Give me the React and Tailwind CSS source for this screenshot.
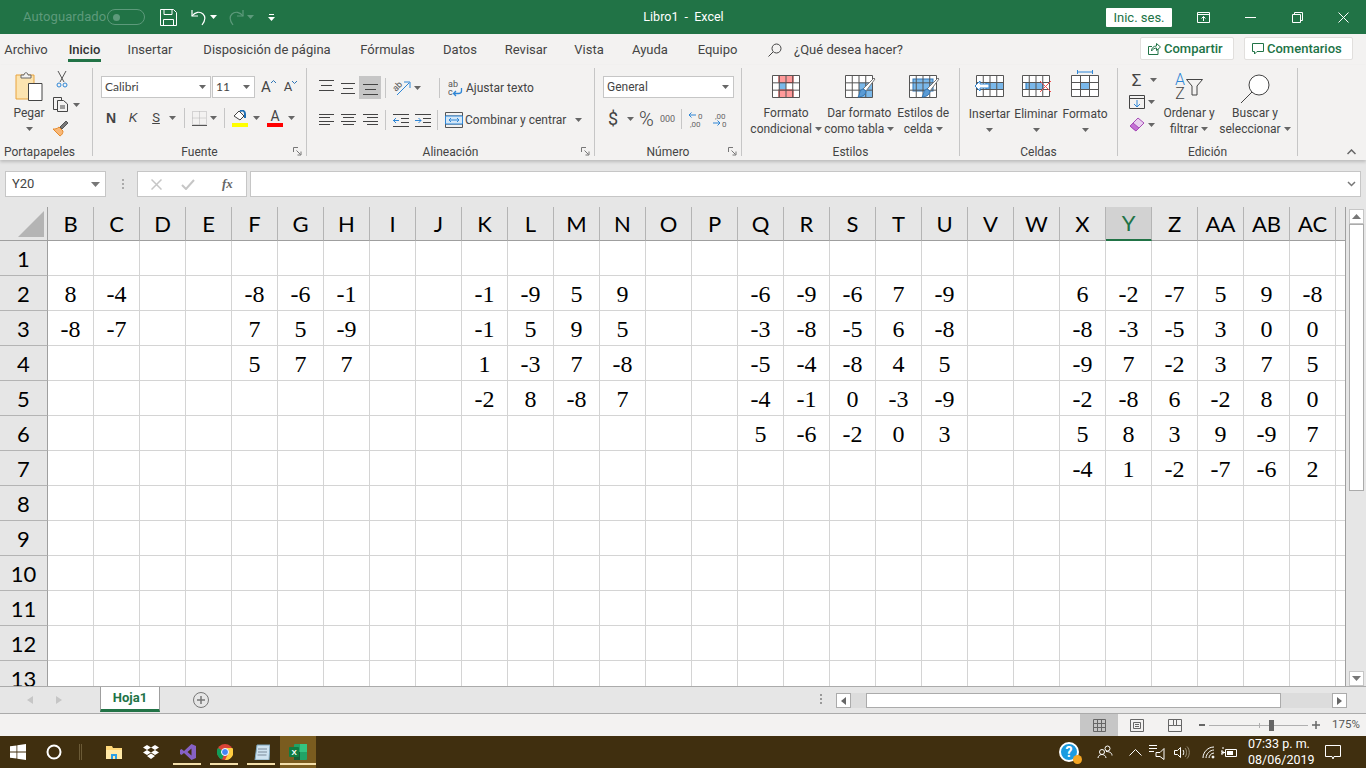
import React from "react";

const COLS = ["B","C","D","E","F","G","H","I","J","K","L","M","N","O","P","Q","R","S","T","U","V","W","X","Y","Z","AA","AB","AC",""];
const DATA = {
  2: { B:8,C:-4,F:-8,G:-6,H:-1,K:-1,L:-9,M:5,N:9,Q:-6,R:-9,S:-6,T:7,U:-9,X:6,Y:-2,Z:-7,AA:5,AB:9,AC:-8 },
  3: { B:-8,C:-7,F:7,G:5,H:-9,K:-1,L:5,M:9,N:5,Q:-3,R:-8,S:-5,T:6,U:-8,X:-8,Y:-3,Z:-5,AA:3,AB:0,AC:0 },
  4: { F:5,G:7,H:7,K:1,L:-3,M:7,N:-8,Q:-5,R:-4,S:-8,T:4,U:5,X:-9,Y:7,Z:-2,AA:3,AB:7,AC:5 },
  5: { K:-2,L:8,M:-8,N:7,Q:-4,R:-1,S:0,T:-3,U:-9,X:-2,Y:-8,Z:6,AA:-2,AB:8,AC:0 },
  6: { Q:5,R:-6,S:-2,T:0,U:3,X:5,Y:8,Z:3,AA:9,AB:-9,AC:7 },
  7: { X:-4,Y:1,Z:-2,AA:-7,AB:-6,AC:2 },
};
const ROWS = [1,2,3,4,5,6,7,8,9,10,11,12,13];

const Caret = ({ c = "#666" }) => (
  <svg width="7" height="4" viewBox="0 0 7 4" className="shrink-0"><path d="M0 0h7L3.5 4z" fill={c} /></svg>
);

const Launcher = () => (
  <svg width="9" height="9" viewBox="0 0 9 9" className="absolute right-[4px] bottom-0" fill="none" stroke="#777">
    <path d="M.5 5V.5H5" /><path d="M3.5 3.5l4 4M8 4.5V8H4.5" />
  </svg>
);

const Group = ({ w, label, children }) => (
  <div className={`relative mt-[3px] h-[88px] shrink-0 border-r border-[#c6c6c6] ${w}`}>
    <div className="h-[76px]">{children}</div>
    <div className="h-[16px] text-center text-[12px] leading-[16px] text-[#444]">{label}</div>
  </div>
);

const Lines = ({ rows }) => (
  <svg width="15" height="14" viewBox="0 0 15 14" fill="none" stroke="#444">
    {rows.map((r, i) => <path key={i} d={`M${r[0]} ${r[2]+.5}H${r[1]}`} />)}
  </svg>
);

const TableIcon = ({ children, w = 28, h = 23, cols = 4, rows = 3 }) => {
  const v = [], hh = [];
  for (let i = 0; i <= cols; i++) v.push(.5 + i * (w - 1) / cols);
  for (let i = 0; i <= rows; i++) hh.push(.5 + i * (h - 1) / rows);
  return (
    <svg width={w} height={h} viewBox={`0 0 ${w} ${h}`} fill="none">
      <rect x=".5" y=".5" width={w-1} height={h-1} fill="#fff" />
      {children}
      {v.map((x) => <path key={x} d={`M${x} .5V${h-.5}`} stroke="#555" />)}
      {hh.map((y) => <path key={y} d={`M.5 ${y}H${w-.5}`} stroke="#555" />)}
    </svg>
  );
};

const Brush = () => (
  <svg width="20" height="24" viewBox="0 0 20 24" className="absolute right-[-3px] bottom-[-3px]">
    <path d="M18 1l1 1-9 12-3-2z" fill="#fff" stroke="#777" />
    <path d="M7 12l3 2c0 3-3 6-8 6 2-2 1-7 5-8z" fill="#5a9bd5" stroke="#2f75b5" />
  </svg>
);

const Bottom2 = ({ a, b, w }) => (
  <div className={`flex flex-col items-center text-[12px] leading-[16px] text-[#444] whitespace-nowrap ${w || ""}`}>
    <span>{a}</span>
    <span className="flex items-center gap-[3px]">{b}<Caret /></span>
  </div>
);

const Tab = ({ w, children, on }) => (
  <div className={`h-full shrink-0 flex flex-col items-center pt-[7px] text-[13px] leading-[18px] whitespace-nowrap ${w} ${on ? "text-[#333] font-medium" : "text-[#444]"}`}>
    <span>{children}</span>
    {on && <span className="h-[2.5px] w-full bg-[#217346]" />}
  </div>
);

function TitleBar() {
  return (
    <div className="h-[34px] bg-[#217346] flex items-center text-white relative">
      <span className="ml-[23px] w-[84px] text-[13px] text-[#5d9a7b] tracking-[0.1px]">Autoguardado</span>
      <div className="w-[38px] h-[16px] rounded-full border border-[#5d9a7b] flex items-center pl-[5px]">
        <span className="w-[7px] h-[7px] rounded-full bg-[#5d9a7b]" />
      </div>
      <svg width="17" height="17" viewBox="0 0 17 17" fill="none" stroke="#fff" className="ml-[15px]">
        <path d="M.5.5h13l3 3v13H.5z" /><path d="M4 .5v5h8v-5M3.5 16.5v-6h10v6" />
      </svg>
      <svg width="16" height="17" viewBox="0 0 16 17" fill="none" stroke="#fff" strokeWidth="1.2" className="ml-[14px]">
        <path d="M1 1v6h6" /><path d="M1 7c3-4 8-5 11-2s2 7-1 11" />
      </svg>
      <span className="ml-[3px]"><Caret c="#fff" /></span>
      <svg width="16" height="17" viewBox="0 0 16 17" fill="none" stroke="#5d9a7b" strokeWidth="1.2" className="ml-[11px]">
        <path d="M15 1v6H9" /><path d="M15 7c-3-4-8-5-11-2s-2 7 1 11" />
      </svg>
      <span className="ml-[3px]"><Caret c="#5d9a7b" /></span>
      <svg width="7" height="7" viewBox="0 0 7 7" className="ml-[14px]"><path d="M1 0h5v1H1zM0 3h7L3.5 7z" fill="#fff" /></svg>
      <div className="flex-1 flex justify-center pr-[14px] text-[12.5px] whitespace-pre text-white">Libro1  -  Excel</div>
      <div className="w-[66px] h-[19px] bg-white rounded-[1px] text-[#217346] text-[13px] leading-[19px] text-center">Inic. ses.</div>
      <svg width="14" height="11" viewBox="0 0 14 11" fill="none" stroke="#fff" className="ml-[25px]">
        <path d="M.5.5h12v10H.5zM.5 2.5h12M6.5 9V4.5M4.5 6.5l2-2 2 2" />
      </svg>
      <div className="ml-[34px] w-[11px] h-px bg-white" />
      <svg width="11" height="11" viewBox="0 0 11 11" fill="none" stroke="#fff" className="ml-[36px]">
        <path d="M.5 2.5h8v8h-8zM2.5 2.5v-2h8v8h-2" />
      </svg>
      <svg width="11" height="11" viewBox="0 0 11 11" fill="none" stroke="#fff" className="ml-[35px] mr-[17px]">
        <path d="M.5.5l10 10M10.5.5l-10 10" />
      </svg>
    </div>
  );
}

function TabsRow() {
  return (
    <div className="h-[31px] bg-[#f3f2f1] flex items-stretch">
      <div className="flex h-full pl-[5px]">
        <Tab w="w-[42px]">Archivo</Tab>
        <div className="w-[21px]" />
        <Tab w="w-[33px]" on>Inicio</Tab>
        <div className="w-[27px]" />
        <Tab w="w-[44px]">Insertar</Tab>
        <div className="w-[30px]" />
        <Tab w="w-[130px]">Disposición de página</Tab>
        <div className="w-[29px]" />
        <Tab w="w-[53px]">Fórmulas</Tab>
        <div className="w-[29px]" />
        <Tab w="w-[34px]">Datos</Tab>
        <div className="w-[28px]" />
        <Tab w="w-[42px]">Revisar</Tab>
        <div className="w-[28px]" />
        <Tab w="w-[28px]">Vista</Tab>
        <div className="w-[29px]" />
        <Tab w="w-[36px]">Ayuda</Tab>
        <div className="w-[29px]" />
        <Tab w="w-[41px]">Equipo</Tab>
      </div>
      <svg width="14" height="14" viewBox="0 0 14 14" fill="none" stroke="#444" className="ml-[30px] mt-[9px]">
        <circle cx="8.5" cy="5.5" r="4.5" /><path d="M5 9l-4.5 4.5" />
      </svg>
      <span className="ml-[12px] w-[112px] pt-[7px] text-[13px] leading-[18px] text-[#444] whitespace-nowrap">¿Qué desea hacer?</span>
      <div className="ml-auto flex mt-[3px] h-[23px]">
        <div className="w-[94px] bg-white border border-[#e1dfdd] rounded-[2px] flex items-center pl-[7px] gap-[3px] text-[13px] font-medium text-[#217346]">
          <svg width="13" height="13" viewBox="0 0 13 13" fill="none" stroke="#217346"><path d="M10 7v5.5H.5v-8H4" /><path d="M3.5 9c0-3 2-5 5-5V1.500l4 3.500-4 3.500V6c-2 0-3.500 1-5 3z" /></svg>
          Compartir
        </div>
        <div className="ml-[10px] mr-[13px] w-[109px] bg-white border border-[#e1dfdd] rounded-[2px] flex items-center pl-[7px] gap-[3px] text-[13px] font-medium text-[#217346]">
          <svg width="12" height="12" viewBox="0 0 12 12" fill="none" stroke="#217346"><path d="M.5.500h11v8H5l-2.500 2.500V8.500h-2z" /></svg>
          Comentarios
        </div>
      </div>
    </div>
  );
}

const Select = ({ w, children, f }) => (
  <div className={`h-[22px] bg-white border border-[#c6c6c6] flex items-center justify-between pl-[3px] pr-[4px] text-[12px] text-[#444] ${f || ""} ${w}`}>
    <span>{children}</span><Caret />
  </div>
);

function Ribbon() {
  const L = { a: [[0,15,1],[2,13,6],[0,15,11]] };
  return (
    <div className="h-[95px] bg-[#f3f2f1] flex shadow-[0_2px_3px_rgba(0,0,0,0.18)] relative z-10">
      <Group w="w-[93px]" label={<div className="text-left pl-[4px]">Portapapeles</div>}>
        <div className="flex">
          <div className="w-[52px] flex flex-col items-center pl-[6px]">
            <svg width="28" height="29" viewBox="0 0 28 29" className="mt-[4px]" fill="none">
              <path d="M1 3h18v24H1z" fill="#fce4b0" stroke="#e8a33d" />
              <path d="M6 3h3c0-3 4-3 4 0h3v3H6z" fill="#f3f2f1" stroke="#666" />
              <path d="M13.500 11.500h13.500v17H13.500z" fill="#fff" stroke="#444" />
            </svg>
            <span className="mt-[4px] text-[12px] leading-[16px] text-[#444]">Pegar</span>
            <span className="mt-[6px]"><Caret /></span>
          </div>
          <div className="flex flex-col pl-[1px] pt-[3px] gap-[9px]">
            <svg width="12" height="17" viewBox="0 0 12 17" fill="none" stroke="#555" className="ml-[3px]">
              <path d="M2 0l6 11M10 0L4 11" /><circle cx="3" cy="14" r="2" stroke="#2e86d6" /><circle cx="9" cy="14" r="2" stroke="#2e86d6" />
            </svg>
            <div className="flex items-center gap-[4px]">
              <svg width="16" height="15" viewBox="0 0 16 15" fill="none" stroke="#444">
                <path d="M.5.500h8v12h-8z" /><path d="M4.500 3.500h6l4 3.500v7.500h-10z" fill="#f3f2f1" /><path d="M7 9h5M7 11h5" />
              </svg>
              <Caret />
            </div>
            <svg width="17" height="16" viewBox="0 0 17 16" fill="none" className="ml-[-1px]">
              <path d="M1 8l7 7c2-1 3-3 3-5L7 6C5 8 3 8 1 8z" fill="#f8b878" stroke="#e58a2c" />
              <path d="M8 6l6-6 2 2-6 6z" fill="#777" stroke="#555" />
            </svg>
          </div>
        </div>
      </Group>

      <Group w="w-[214px]" label="Fuente">
        <div className="pl-[8px] pt-[8px]">
          <div className="flex items-center">
            <Select w="w-[110px]" f="font-['Lato']">Calibri</Select>
            <div className="w-px" />
            <Select w="w-[43px]" f="font-['Lato']">11</Select>
            <span className="ml-[6px] text-[15px] text-[#444] leading-[20px]">A</span>
            <svg width="5" height="4" viewBox="0 0 5 4" fill="none" stroke="#2e75b6" className="mb-[10px]"><path d="M0 3l2.500-2.500L5 3" /></svg>
            <span className="ml-[8px] text-[13px] text-[#444] leading-[20px]">A</span>
            <svg width="5" height="4" viewBox="0 0 5 4" fill="none" stroke="#2e75b6" className="mb-[10px]"><path d="M0 1l2.500 2.500L5 1" /></svg>
          </div>
          <div className="flex items-center h-[20px] mt-[10px] text-[#444]">
            <span className="w-[20px] text-center text-[14px] font-bold font-['Liberation_Sans']">N</span>
            <span className="ml-[2px] w-[20px] text-center text-[13px] italic font-['Liberation_Sans']">K</span>
            <span className="ml-[3px] w-[20px] text-center text-[13px] underline">S</span>
            <span className="ml-[3px]"><Caret /></span>
            <div className="ml-[8px] w-px h-[20px] bg-[#c6c6c6]" />
            <svg width="15" height="15" viewBox="0 0 15 15" fill="none" stroke="#b5b5b5" strokeDasharray="1 1" className="ml-[7px]">
              <path d="M.5.500h14v13H.500zM7.500.5v13M.5 7h14" /><path d="M0 14.500h15" stroke="#555" strokeDasharray="none" />
            </svg>
            <span className="ml-[3px]"><Caret /></span>
            <div className="ml-[7px] w-px h-[20px] bg-[#c6c6c6]" />
            <div className="ml-[7px] flex flex-col items-center w-[16px]">
              <svg width="16" height="12" viewBox="0 0 16 12" fill="none"><path d="M2 6l5-5 5 5-4 4z" fill="#fff" stroke="#444" /><path d="M8 1c3-1 5 0 5 3v4" stroke="#1f6fb5" strokeWidth="2" /></svg>
              <span className="mt-[1px] w-[16px] h-[4px] bg-[#ffff00]" />
            </div>
            <span className="ml-[5px]"><Caret /></span>
            <div className="ml-[7px] flex flex-col items-center w-[16px]">
              <span className="text-[14px] leading-[12px] text-[#444] h-[12px]">A</span>
              <span className="mt-[1px] w-[16px] h-[4px] bg-[#ff0000]" />
            </div>
            <span className="ml-[5px]"><Caret /></span>
          </div>
        </div>
        <Launcher />
      </Group>

      <Group w="w-[288px]" label="Alineación">
        <div className="pt-[8px] pl-[8px]">
          <div className="flex items-center h-[23px]">
            <div className="w-[22px] flex justify-center pb-[4px]"><Lines rows={L.a} /></div>
            <div className="w-[22px] flex justify-center"><Lines rows={[[0,14,2],[2,12,7],[0,14,12]]} /></div>
            <div className="w-[22px] h-[23px] bg-[#c6c6c6] flex justify-center items-end pb-[2px]"><Lines rows={L.a} /></div>
            <div className="ml-[4px] w-px h-[20px] bg-[#c6c6c6]" />
            <svg width="18" height="17" viewBox="0 0 18 17" fill="none" className="ml-[7px]">
              <text x="0" y="10" fontSize="9" fill="#555" fontFamily="Roboto" transform="rotate(-45 5 8)">ab</text>
              <path d="M4 16L16 4M11 3h6v6" stroke="#2e86d6" />
            </svg>
            <span className="ml-[3px]"><Caret /></span>
            <div className="ml-[18px] w-px h-[20px] bg-[#c6c6c6]" />
            <svg width="16" height="18" viewBox="0 0 16 18" fill="none" className="ml-[8px]">
              <text x="0" y="8" fontSize="9" fill="#555" fontFamily="Roboto">ab</text>
              <text x="0" y="16" fontSize="9" fill="#555" fontFamily="Roboto">c</text>
              <path d="M13.500 9v3c0 2-1 2.500-3 2.500H6M8 12l-2.500 2.500L8 17" stroke="#2e86d6" strokeWidth="1.300" />
            </svg>
            <span className="ml-[2px] text-[12px] text-[#444] whitespace-nowrap">Ajustar texto</span>
          </div>
          <div className="flex items-center h-[22px] mt-[10px]">
            <div className="w-[22px] flex justify-center"><Lines rows={[[0,15,1],[0,11,4],[0,15,8],[0,11,11]]} /></div>
            <div className="w-[22px] flex justify-center"><Lines rows={[[0,15,1],[2,13,4],[0,15,8],[2,13,11]]} /></div>
            <div className="w-[22px] flex justify-center"><Lines rows={[[0,15,1],[4,15,4],[0,15,8],[4,15,11]]} /></div>
            <div className="ml-[4px] w-px h-[20px] bg-[#c6c6c6]" />
            <svg width="16" height="13" viewBox="0 0 16 13" fill="none" className="ml-[7px]"><path d="M0 .500h16M8 4.500h8M8 8.500h8M0 12.500h16" stroke="#444" /><path d="M6 6.500H0M3 4L.5 6.500 3 9" stroke="#2e86d6" /></svg>
            <svg width="16" height="13" viewBox="0 0 16 13" fill="none" className="ml-[6px]"><path d="M0 .500h16M8 4.500h8M8 8.500h8M0 12.500h16" stroke="#444" /><path d="M0 6.500h6M3.500 4L6 6.500 3.500 9" stroke="#2e86d6" /></svg>
            <div className="ml-[6px] w-px h-[20px] bg-[#c6c6c6]" />
            <svg width="18" height="16" viewBox="0 0 18 16" fill="none" className="ml-[7px]">
              <path d="M.5.500h17v15H.500zM.5 4h17M.5 12h17" stroke="#555" /><path d="M.5 4h17v8H.500z" fill="#d4e7f7" stroke="#2e86d6" /><path d="M4 8h10M6 6L4 8l2 2M12 6l2 2-2 2" stroke="#2e86d6" />
            </svg>
            <span className="ml-[2px] w-[102px] text-[12px] text-[#444] whitespace-nowrap">Combinar y centrar</span>
            <span className="ml-[8px]"><Caret /></span>
          </div>
        </div>
        <Launcher />
      </Group>

      <Group w="w-[147px]" label="Número">
        <div className="pt-[8px] pl-[8px]">
          <Select w="w-[131px]">General</Select>
          <div className="flex items-center mt-[11px] h-[20px] text-[#444]">
            <span className="ml-[5px] w-[10px] text-[18px] leading-[20px]">$</span>
            <span className="ml-[9px]"><Caret /></span>
            <span className="ml-[5px] w-[17px] text-[20px] font-light leading-[20px]">%</span>
            <span className="ml-[4px] w-[16px] text-[9px] leading-[20px] text-[#666]">000</span>
            <div className="ml-[5px] w-px h-[20px] bg-[#c6c6c6]" />
            <svg width="18" height="17" viewBox="0 0 18 17" fill="none" className="ml-[6px]">
              <path d="M8 4H1M3.500 1.500L1 4l2.500 2.500" stroke="#2e86d6" />
              <text x="10" y="8" fontSize="8" fill="#666" fontFamily="Roboto">0</text>
              <text x="2" y="16" fontSize="8" fill="#666" fontFamily="Roboto">,00</text>
            </svg>
            <svg width="18" height="17" viewBox="0 0 18 17" fill="none" className="ml-[6px]">
              <path d="M1 12h7M5.500 9.500L8 12l-2.500 2.500" stroke="#2e86d6" />
              <text x="3" y="8" fontSize="8" fill="#666" fontFamily="Roboto">,00</text>
              <text x="10" y="16" fontSize="8" fill="#666" fontFamily="Roboto">0</text>
            </svg>
          </div>
        </div>
        <Launcher />
      </Group>

      <Group w="w-[218px]" label="Estilos">
        <div className="flex pt-[7px]">
          <div className="w-[92px] flex flex-col items-center pr-[1px]">
            <TableIcon>
              <rect x="7" y=".5" width="14" height="7" fill="#ff9a9a" stroke="#e02020" />
              <rect x="7" y="7.500" width="7" height="7" fill="#7ab8ea" />
              <rect x="7" y="15" width="14" height="7.500" fill="#ff9a9a" stroke="#e02020" />
            </TableIcon>
            <span className="h-[7px]" />
            <Bottom2 a="Formato" b="condicional" />
          </div>
          <div className="w-[56px] flex flex-col items-center">
            <div className="relative">
              <TableIcon>
                <rect x="14" y="7.500" width="13" height="15" fill="#7ab8ea" />
              </TableIcon>
              <Brush />
            </div>
            <span className="h-[7px]" />
            <Bottom2 a="Dar formato" b="como tabla" />
          </div>
          <div className="w-[74px] flex flex-col items-center">
            <div className="relative">
              <TableIcon>
                <rect x="4" y="4" width="20" height="12" fill="#7ab8ea" stroke="#2e75b6" />
              </TableIcon>
              <Brush />
            </div>
            <span className="h-[7px]" />
            <Bottom2 a="Estilos de" b="celda" />
          </div>
        </div>
      </Group>

      <Group w="w-[158px]" label="Celdas">
        <div className="flex pt-[7px] pl-[5px]">
          {[
            ["Insertar", "w-[49px]", (
              <div className="relative" key="i">
                <TableIcon h={22}><rect x="10" y="7.500" width="18" height="7" fill="#7ab8ea" stroke="#1f6fb5" /></TableIcon>
                <svg width="16" height="12" viewBox="0 0 16 12" fill="none" className="absolute left-[-2px] top-[5px]"><path d="M15 4H6V1L1 6l5 5V8h9z" fill="#fff" stroke="#2e86d6" /></svg>
              </div>)],
            ["Eliminar", "w-[44px]", (
              <div className="relative" key="e">
                <TableIcon h={22}><rect x="4" y="7.500" width="17" height="7" fill="#7ab8ea" stroke="#1f6fb5" /></TableIcon>
                <svg width="13" height="13" viewBox="0 0 13 13" fill="none" stroke="#f05050" className="absolute right-[-2px] top-[5px]"><path d="M1 1l11 11M12 1L1 12" /></svg>
              </div>)],
            ["Formato", "w-[54px]", (
              <div className="relative" key="f">
                <TableIcon h={22} cols={3}><rect x="9.500" y="7.500" width="9" height="7" fill="#7ab8ea" stroke="#1f6fb5" /></TableIcon>
                <svg width="16" height="4" viewBox="0 0 16 4" fill="none" stroke="#2e86d6" className="absolute left-[6px] top-[-5px]"><path d="M.5 0v4M15.500 0v4M.5 2h15" /></svg>
              </div>)],
          ].map(([t, w, ic]) => (
            <div key={t} className={`flex flex-col items-center ${w}`}>
              {ic}
              <span className="mt-[9px] text-[12px] leading-[16px] text-[#444]">{t}</span>
              <span className="mt-[6px]"><Caret /></span>
            </div>
          ))}
        </div>
      </Group>

      <Group w="w-[180px]" label="Edición">
        <div className="flex pt-[5px]">
          <div className="w-[46px] pl-[11px] flex flex-col gap-[8px]">
            <div className="flex items-center h-[14px] gap-[6px]">
              <span className="w-[15px] text-center text-[17px] leading-[14px] text-[#444]">Σ</span>
              <Caret />
            </div>
            <div className="flex items-center h-[14px] gap-[3px]">
              <svg width="16" height="14" viewBox="0 0 16 14" fill="none"><path d="M.5.500h15v13H.500z" stroke="#444" /><path d="M.5 3.500h15" stroke="#444" /><path d="M8 5v7M5 9l3 3 3-3" stroke="#2e86d6" /></svg>
              <Caret />
            </div>
            <div className="flex items-center h-[16px] gap-[3px]">
              <svg width="16" height="16" viewBox="0 0 16 16" fill="none"><path d="M1 9l8-8 6 5-8 8z" fill="#e8d0ee" stroke="#a74bb8" /><path d="M1 9l6 5 3-3-6-5z" fill="#c36fd4" stroke="#a74bb8" /></svg>
              <Caret />
            </div>
          </div>
          <div className="w-[50px] flex flex-col items-center">
            <div className="h-[32px] flex items-start">
              <div className="flex flex-col items-center text-[16px] font-light leading-[14px] mr-[1px]">
                <span className="text-[#2e86d6]">A</span><span className="text-[#444]">Z</span>
              </div>
              <svg width="17" height="17" viewBox="0 0 17 17" fill="none" stroke="#444" className="mt-[6px]"><path d="M.5.500h16L11 7v9H6V7z" /></svg>
            </div>
            <Bottom2 a="Ordenar y" b="filtrar" />
          </div>
          <div className="w-[82px] flex flex-col items-center">
            <svg width="30" height="30" viewBox="0 0 30 30" fill="none" stroke="#444" className="h-[32px]">
              <circle cx="19" cy="11" r="10" fill="#fff" /><path d="M12 18L1 29" />
            </svg>
            <Bottom2 a="Buscar y" b="seleccionar" />
          </div>
        </div>
      </Group>

      <div className="flex-1 flex items-end justify-end pr-[10px] pb-[5px]">
        <svg width="9" height="6" viewBox="0 0 9 6" fill="none" stroke="#666" strokeWidth="1.500"><path d="M.5 5l4-4 4 4" /></svg>
      </div>
    </div>
  );
}

function FormulaBar() {
  return (
    <div className="h-[42px] bg-[#e6e6e6] pt-[6px] pl-[5px] flex items-start">
      <div className="w-[101px] h-[26px] bg-white border border-[#c6c6c6] flex items-center justify-between pl-[6px] pr-[5px] text-[13px] text-[#444]">
        Y20
        <svg width="9" height="5" viewBox="0 0 9 5"><path d="M0 0h9L4.500 5z" fill="#777" /></svg>
      </div>
      <div className="ml-[15px] mt-[8px] w-[3px] h-[11px] flex flex-col items-center">
        <span className="w-[2px] h-[2px] bg-[#aaa]" /><span className="w-[2px] h-[2px] bg-[#aaa] mt-[2px]" /><span className="w-[2px] h-[2px] bg-[#aaa] mt-[2px]" />
      </div>
      <div className="ml-[13px] w-[110px] h-[26px] bg-white border border-[#c6c6c6] flex items-center pl-[13px]">
        <svg width="11" height="11" viewBox="0 0 11 11" fill="none" stroke="#c6c6c6" strokeWidth="1.500"><path d="M.5.500l10 10M10.500.500l-10 10" /></svg>
        <svg width="14" height="11" viewBox="0 0 14 11" fill="none" stroke="#c6c6c6" strokeWidth="2" className="ml-[19px]"><path d="M1 6l4 4 8-9" /></svg>
        <span className="ml-[27px] text-[13px] italic text-[#666] font-['Liberation_Serif'] font-bold">fx</span>
      </div>
      <div className="ml-[3px] w-[1111px] h-[26px] bg-white border border-[#c6c6c6] flex items-center justify-end pr-[4px]">
        <svg width="9" height="6" viewBox="0 0 9 6" fill="none" stroke="#777" strokeWidth="1.500"><path d="M1 1l3.500 3.500L8 1" /></svg>
      </div>
    </div>
  );
}

function Sheet() {
  return (
    <div className="h-[479px] flex bg-[#e6e6e6] overflow-hidden">
      <div className="w-[1345px] shrink-0 overflow-hidden">
        <div className="flex h-[34px]">
          <div className="w-[48px] shrink-0 h-full bg-[#e6e6e6] border-r border-b border-[#9f9f9f] flex items-end justify-end pr-[3px] pb-[3px]">
            <svg width="26" height="26" viewBox="0 0 26 26"><path d="M26 0v26H0z" fill="#b4b4b4" /></svg>
          </div>
          {COLS.map((c, i) => (
            <div key={i} className={`w-[46px] shrink-0 h-full border-b border-r flex items-center justify-center font-['Lato'] text-[22px] leading-none ${c === "Y" ? "bg-[#d2d2d2] text-[#217346] border-b-[#217346] border-b-[2px] border-r-[#b4b4b4]" : c === "" ? "border-r-transparent border-b-[#9f9f9f]" : "text-black border-r-[#b4b4b4] border-b-[#9f9f9f]"}`}>
              {c}
            </div>
          ))}
        </div>
        {ROWS.map((r) => (
          <div key={r} className="flex h-[35px]">
            <div className="w-[48px] shrink-0 h-full bg-[#e6e6e6] border-r border-b border-r-[#9f9f9f] border-b-[#b4b4b4] flex items-center justify-center pt-[2px] font-['Lato'] text-[22px] text-black leading-none">
              {r}
            </div>
            {COLS.map((c, i) => (
              <div key={i} className="w-[46px] shrink-0 h-full bg-white border-r border-b border-[#d4d4d4] flex items-center justify-center pt-[2px] font-['Liberation_Serif'] text-[24px] text-black leading-none">
                {DATA[r] && DATA[r][c] !== undefined ? DATA[r][c] : ""}
              </div>
            ))}
          </div>
        ))}
      </div>
      <div className="w-[21px] shrink-0 h-full border-l border-[#9f9f9f] pl-[3px] pr-[3px] pt-[2px] flex flex-col">
        <div className="h-[15px] w-[15px] bg-white border border-[#c6c6c6] flex items-center justify-center">
          <svg width="9" height="5" viewBox="0 0 9 5"><path d="M4.500 0L9 5H0z" fill="#777" /></svg>
        </div>
        <div className="h-[267px] w-[15px] bg-white border border-[#ababab]" />
        <div className="flex-1" />
        <div className="h-[15px] w-[15px] bg-white border border-[#c6c6c6] flex items-center justify-center">
          <svg width="9" height="5" viewBox="0 0 9 5"><path d="M0 0h9L4.500 5z" fill="#777" /></svg>
        </div>
      </div>
    </div>
  );
}

function SheetTabs() {
  return (
    <div className="h-[28px] bg-[#e6e6e6] border-t border-b border-[#ababab] flex items-start">
      <svg width="6" height="8" viewBox="0 0 6 8" className="ml-[27px] mt-[9px]"><path d="M6 0v8L0 4z" fill="#c6c6c6" /></svg>
      <svg width="6" height="8" viewBox="0 0 6 8" className="ml-[23px] mt-[9px]"><path d="M0 0v8l6-4z" fill="#c6c6c6" /></svg>
      <div className="ml-[38px] w-[60px] h-[25px] bg-white border-l border-r border-[#9f9f9f] border-b-[3px] border-b-[#217346] flex items-center justify-center text-[13px] font-bold text-[#217346]">Hoja1</div>
      <svg width="16" height="16" viewBox="0 0 16 16" fill="none" stroke="#777" className="ml-[33px] mt-[5px]">
        <circle cx="8" cy="8" r="7.500" /><path d="M8 4v8M4 8h8" strokeWidth="1.500" />
      </svg>
      <div className="ml-[611px] mt-[7px] h-[11px] flex flex-col items-center">
        <span className="w-[2px] h-[2px] bg-[#999]" /><span className="w-[2px] h-[2px] bg-[#999] mt-[2px]" /><span className="w-[2px] h-[2px] bg-[#999] mt-[2px]" />
      </div>
      <div className="ml-[14px] mt-[6px] h-[15px] w-[15px] bg-white border border-[#ababab] flex items-center justify-center">
        <svg width="5" height="8" viewBox="0 0 5 8"><path d="M5 0v8L0 4z" fill="#666" /></svg>
      </div>
      <div className="mt-[6px] h-[15px] w-[481px] bg-[#dcdcdc] pl-[15px]">
        <div className="w-[415px] h-[15px] bg-white border border-[#ababab]" />
      </div>
      <div className="mt-[6px] h-[15px] w-[15px] bg-white border border-[#ababab] flex items-center justify-center">
        <svg width="5" height="8" viewBox="0 0 5 8"><path d="M0 0v8l5-4z" fill="#666" /></svg>
      </div>
    </div>
  );
}

function StatusBar() {
  return (
    <div className="h-[22px] bg-[#f3f2f1] flex items-center justify-end">
      <div className="w-[38px] h-full bg-[#c6c6c6] flex items-center justify-center">
        <svg width="13" height="13" viewBox="0 0 13 13" fill="none" stroke="#666"><path d="M.5.500h12v12H.500zM4.500.5v12M8.500.5v12M.5 4.500h12M.5 8.500h12" /></svg>
      </div>
      <div className="w-[38px] flex justify-center">
        <svg width="14" height="13" viewBox="0 0 14 13" fill="none" stroke="#666"><path d="M.5.500h13v12H.500zM3.500 3.500h7v6h-7zM5 5.500h4M5 7.500h4" /></svg>
      </div>
      <div className="w-[38px] flex justify-center">
        <svg width="14" height="13" viewBox="0 0 14 13" fill="none" stroke="#666"><path d="M.5.500h13v12H.500zM5.500.5v6h-5M5.500 6.500H13.500M8.500.5v6" /></svg>
      </div>
      <div className="ml-[5px] w-[6px] h-[2px] bg-[#666]" />
      <div className="ml-[4px] w-[99px] h-px bg-[#b0b0b0] relative">
        <span className="absolute left-[50px] top-[-2px] w-px h-[5px] bg-[#b0b0b0]" />
        <span className="absolute left-[60px] top-[-5px] w-[5px] h-[11px] bg-[#666]" />
      </div>
      <svg width="8" height="8" viewBox="0 0 8 8" fill="none" stroke="#666" strokeWidth="1.500" className="ml-[4px]"><path d="M4 0v8M0 4h8" /></svg>
      <span className="ml-[12px] w-[34px] text-[11.500px] text-[#555] whitespace-nowrap">175%</span>
    </div>
  );
}

function Taskbar() {
  const Run = ({ children, w = "w-[37px]", active, first }) => (
    <div className={`relative h-full flex items-center justify-center ${w} ${active ? "bg-[#7a5c1f]" : ""}`}>
      {children}
      <span className={`absolute bottom-[3px] h-[2px] bg-[#f4dfaa] ${active ? "left-0 right-0" : "left-[4px] right-[5px]"} ${first ? "hidden" : ""}`} />
    </div>
  );
  return (
    <div className="h-[32px] bg-[#402f0f] flex items-center text-white">
      <svg width="16" height="16" viewBox="0 0 16 16" fill="#fff" className="ml-[10px]">
        <path d="M0 2.300l6.500-.9v6.200H0zM7.300 1.300L16 0v7.600H7.300zM0 8.400h6.500v6.200L0 13.700zM7.300 8.400H16V16l-8.700-1.200z" />
      </svg>
      <svg width="16" height="16" viewBox="0 0 16 16" fill="none" stroke="#fff" strokeWidth="2" className="ml-[20px]"><circle cx="8" cy="8" r="6.500" /></svg>
      <div className="ml-[17px] w-[3px] h-[16px] border-l border-r border-[#6b5a36]" />
      <div className="ml-[13px] flex h-full">
        <Run first>
          <svg width="16" height="14" viewBox="0 0 16 14"><path d="M0 1h6l1 2h9v11H0z" fill="#ffd87a" /><path d="M0 5h16v9H0z" fill="#ffe9a8" /><path d="M5 14V9h6v5h-2v-3H7v3z" fill="#2b9fe6" /></svg>
        </Run>
        <Run first>
          <svg width="16" height="14" viewBox="0 0 16 14" fill="#fff"><path d="M4 0l4 2.500L4 5 0 2.500zM12 0l4 2.500L12 5 8 2.500zM4 5l4 2.500L4 10 0 7.500zM12 5l4 2.500-4 2.500-4-2.500zM8 8.500l4 2.500-4 3-4-3z" /></svg>
        </Run>
        <Run>
          <svg width="16" height="16" viewBox="0 0 16 16"><path d="M11.500 0L16 2v12l-4.500 2L4 9l-2.500 2L0 10V6l1.500-1L4 7zM11.500 4.500L7.500 8l4 3.500z" fill="#8661c5" /></svg>
        </Run>
        <Run>
          <svg width="16" height="16" viewBox="0 0 16 16">
            <circle cx="8" cy="8" r="8" fill="#db4437" /><path d="M8 8L1 4a8 8 0 0 0 4 11.500z" fill="#0f9d58" /><path d="M8 4h7.400A8 8 0 0 1 8 16l3-6z" fill="#ffcd40" /><circle cx="8" cy="8" r="3.500" fill="#4285f4" stroke="#fff" />
          </svg>
        </Run>
        <Run>
          <svg width="16" height="16" viewBox="0 0 16 16"><path d="M3 1h13l-1 15H1z" fill="#cfe3f0" stroke="#7fa8bf" /><path d="M4 5h9M4 8h9M3.500 11h9" stroke="#7a8a99" /></svg>
        </Run>
        <Run active w="w-[36px]">
          <svg width="18" height="16" viewBox="0 0 18 16">
            <rect x="5" width="13" height="16" rx="1" fill="#21a366" /><rect x="11" width="7" height="8" fill="#33c481" /><rect x="5" y="8" width="6" height="8" fill="#185c37" />
            <rect y="3" width="10" height="10" rx="1" fill="#107c41" />
            <text x="2.500" y="11" fontSize="8" fontWeight="bold" fill="#fff" fontFamily="Liberation Sans">X</text>
          </svg>
        </Run>
      </div>
      <div className="flex-1" />
      <div className="relative w-[20px] h-[20px] rounded-full bg-[#1b9be0] border-2 border-white flex items-center justify-center text-[14px] font-bold leading-none">
        ?
        <span className="absolute right-[-5px] bottom-[-4px] w-[9px] h-[9px] rounded-full bg-[#f5a623]" />
      </div>
      <svg width="16" height="14" viewBox="0 0 16 14" fill="none" stroke="#fff" className="ml-[18px]">
        <circle cx="10.500" cy="3.500" r="2.500" /><circle cx="5" cy="7" r="2.500" /><path d="M1 13c0-2 2-3.500 4-3.500s4 1.500 4 3.500M9 6.500c3 0 6 1 6 4" />
      </svg>
      <svg width="13" height="7" viewBox="0 0 13 7" fill="none" stroke="#fff" className="ml-[16px]"><path d="M.5 6.500l6-6 6 6" /></svg>
      <svg width="16" height="15" viewBox="0 0 16 15" fill="none" stroke="#fff" className="ml-[7px]"><path d="M0 .5h8M0 3.500h8M0 6.500h5M7 7.500h4l4-4v11l-4-3H7z" /></svg>
      <svg width="16" height="13" viewBox="0 0 16 13" fill="none" stroke="#fff" className="ml-[9px]"><path d="M.5 4.500h3l3-3v10l-3-3h-3zM9 4c1 1 1 4 0 5" /><path d="M11 2c2 2 2 7 0 9M13 .5c3 3 3 9 0 12" stroke="#9a8f78" /></svg>
      <svg width="13" height="13" viewBox="0 0 13 13" fill="none" stroke="#fff" className="ml-[12px]"><path d="M1 12c0-6 5-11 11-11M4 12c0-4 4-8 8-8M7 12c0-2 2-5 5-5" /><circle cx="11" cy="11" r="1" fill="#fff" /></svg>
      <svg width="16" height="11" viewBox="0 0 16 11" fill="none" stroke="#fff" className="ml-[6px]"><path d="M4.500 2.500h11v7h-11zM0 4h2v3H0zM2 2V0M1 5.500h3" /><path d="M6 4h6v4H6z" fill="#fff" stroke="none" /></svg>
      <div className="ml-[11px] w-[58px] flex flex-col text-[12.500px] leading-[16px] whitespace-nowrap">
        <span>07:33 p. m.</span><span>08/06/2019</span>
      </div>
      <svg width="16" height="15" viewBox="0 0 16 15" fill="none" stroke="#fff" className="ml-[19px] mr-[25px]"><path d="M.5.500h15v11H9l-1 2.500-1-2.500H.500z" /></svg>
    </div>
  );
}

export default function App() {
  return (
    <div className="w-[1366px] h-[768px] overflow-hidden font-['Roboto','Noto_Sans',sans-serif] bg-[#f3f2f1]">
      <TitleBar />
      <TabsRow />
      <Ribbon />
      <div className="h-[5px] bg-[#e6e6e6]" />
      <FormulaBar />
      <Sheet />
      <SheetTabs />
      <StatusBar />
      <Taskbar />
    </div>
  );
}
